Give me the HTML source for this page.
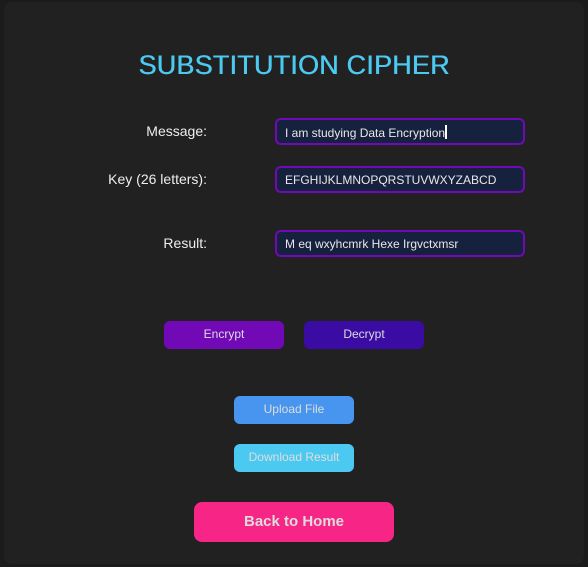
<!DOCTYPE html>
<html><head><style>
*{margin:0;padding:0;box-sizing:border-box}
body{width:588px;height:567px;background:#1b1b1b;font-family:"Liberation Sans",sans-serif;position:relative;overflow:hidden}
.panel{position:absolute;left:4px;top:2px;width:580px;height:562px;background:#212121;border-radius:8px}
h1{position:absolute;left:0;width:588px;top:50px;text-align:center;color:#4cc9f0;font-size:27px;font-weight:normal;letter-spacing:0.2px;text-shadow:0.5px 0 0 #4cc9f0}
.lbl{position:absolute;right:381px;color:#eee;font-size:14px}
.inp{position:absolute;left:275px;width:250px;height:27px;border:2px solid #7209b7;border-radius:6px;background:#16213e;color:#e8e8e8;font-size:12px;padding:5px 0 0 8px}
.btn{position:absolute;border-radius:6px;color:#ddd;font-size:12px;text-align:center}
</style></head><body>
<div class="panel"></div>
<h1>SUBSTITUTION CIPHER</h1>
<div class="lbl" style="top:123px">Message:</div>
<div class="inp" style="top:118px">I am studying Data Encryption<span style="display:inline-block;width:2px;height:14px;background:#fff;vertical-align:-2px"></span></div>
<div class="lbl" style="top:171px">Key (26 letters):</div>
<div class="inp" style="top:166px">EFGHIJKLMNOPQRSTUVWXYZABCD</div>
<div class="lbl" style="top:235px">Result:</div>
<div class="inp" style="top:230px">M eq wxyhcmrk Hexe Irgvctxmsr</div>
<div class="btn" style="left:164px;top:321px;width:120px;height:28px;line-height:27px;background:#7209b7">Encrypt</div>
<div class="btn" style="left:304px;top:321px;width:120px;height:28px;line-height:27px;background:#3a0ca3">Decrypt</div>
<div class="btn" style="left:234px;top:396px;width:120px;height:28px;line-height:27px;background:#4895ef">Upload File</div>
<div class="btn" style="left:234px;top:444px;width:120px;height:28px;line-height:27px;background:#4cc9f0">Download Result</div>
<div class="btn" style="left:194px;top:502px;width:200px;height:40px;line-height:39px;background:#f72585;font-size:15px;font-weight:bold;border-radius:8px">Back to Home</div>
</body></html>
